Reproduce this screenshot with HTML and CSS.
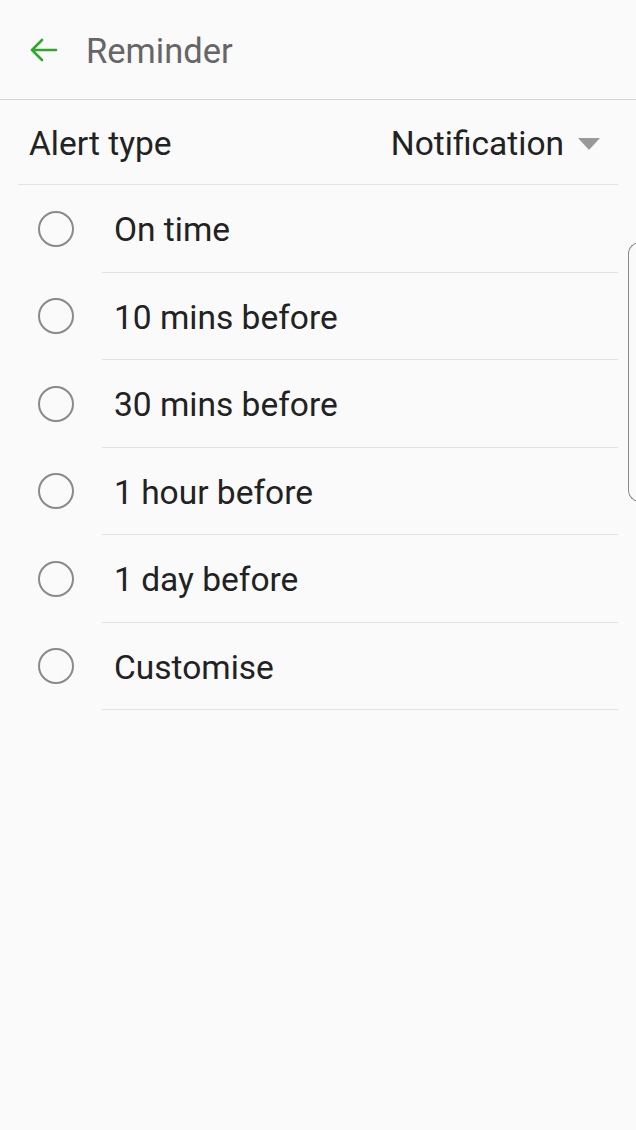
FILE: index.html
```html
<!DOCTYPE html>
<html lang="en">
<head>
  <meta charset="UTF-8">
  <meta name="viewport" content="width=device-width, initial-scale=1.0">
  <title>Reminder</title>
  <link rel="stylesheet" href="styles.css">
</head>
<body>
  <header class="topbar">
    <svg class="back" width="32" height="32" viewBox="0 0 32 32">
      <path d="M29 16H5M15 6L5 16l10 10" fill="none" stroke="#2fa82a" stroke-width="2.6" stroke-linecap="round" stroke-linejoin="round"/>
    </svg>
    <span class="title">Reminder</span>
  </header>

  <main class="content">
    <div class="alert-row">
      <span>Alert type</span>
      <span class="select">Notification <span class="caret"></span></span>
    </div>

    <ul class="options">
      <li><span class="radio"></span><span class="label">On time</span></li>
      <li><span class="radio"></span><span class="label">10 mins before</span></li>
      <li><span class="radio"></span><span class="label">30 mins before</span></li>
      <li><span class="radio"></span><span class="label">1 hour before</span></li>
      <li><span class="radio"></span><span class="label">1 day before</span></li>
      <li><span class="radio"></span><span class="label">Customise</span></li>
    </ul>
  </main>

  <div class="edge-handle"></div>
</body>
</html>
```

FILE: styles.css
```css
/* Pantalla de recordatorio */
body {
  font-family: Roboto, "Noto Sans", sans-serif;
  margin: 0;
  padding: 0;
  background-color: #fafafa;
  color: #222;
}
.topbar {
  height: 99px;
  display: flex;
  align-items: center;
  border-bottom: 1px solid #d6d6d6;
}
.back {
  margin-left: 27px;
  margin-right: 27px;
}
.title {
  font-size: 34.5px;
  color: #666;
  padding-top: 2px;
}
.content {
  padding: 0 18px;
}
.alert-row {
  height: 84px;
  display: flex;
  align-items: center;
  justify-content: space-between;
  padding: 3px 18px 0 11px;
  box-sizing: border-box;
  height: 85px;
  border-bottom: 1px solid #e4e4e4;
  font-size: 33.5px;
}
.select {
  display: flex;
  align-items: center;
}
.caret {
  margin-left: 14px;
  width: 0;
  height: 0;
  border-left: 11px solid transparent;
  border-right: 11px solid transparent;
  border-top: 12px solid #999;
}
.options {
  list-style: none;
  margin: 0;
  padding: 0;
}
.options li {
  height: 87.5px;
  display: flex;
  align-items: center;
}
.radio {
  width: 32px;
  height: 32px;
  border: 2px solid #8a8a8a;
  border-radius: 50%;
  margin-left: 20px;
  margin-right: 40px;
  flex-shrink: 0;
}
.label {
  flex: 1;
  height: 100%;
  display: flex;
  align-items: center;
  margin-left: -12px;
  padding: 3px 0 0 12px;
  border-bottom: 1px solid #e2e2e2;
  box-sizing: border-box;
  font-size: 33.5px;
}
.edge-handle {
  position: absolute;
  left: 628px;
  top: 242px;
  width: 14px;
  height: 258px;
  border: 1.5px solid #8a8a8a;
  border-right: none;
  border-radius: 12px 0 0 12px;
}
```
